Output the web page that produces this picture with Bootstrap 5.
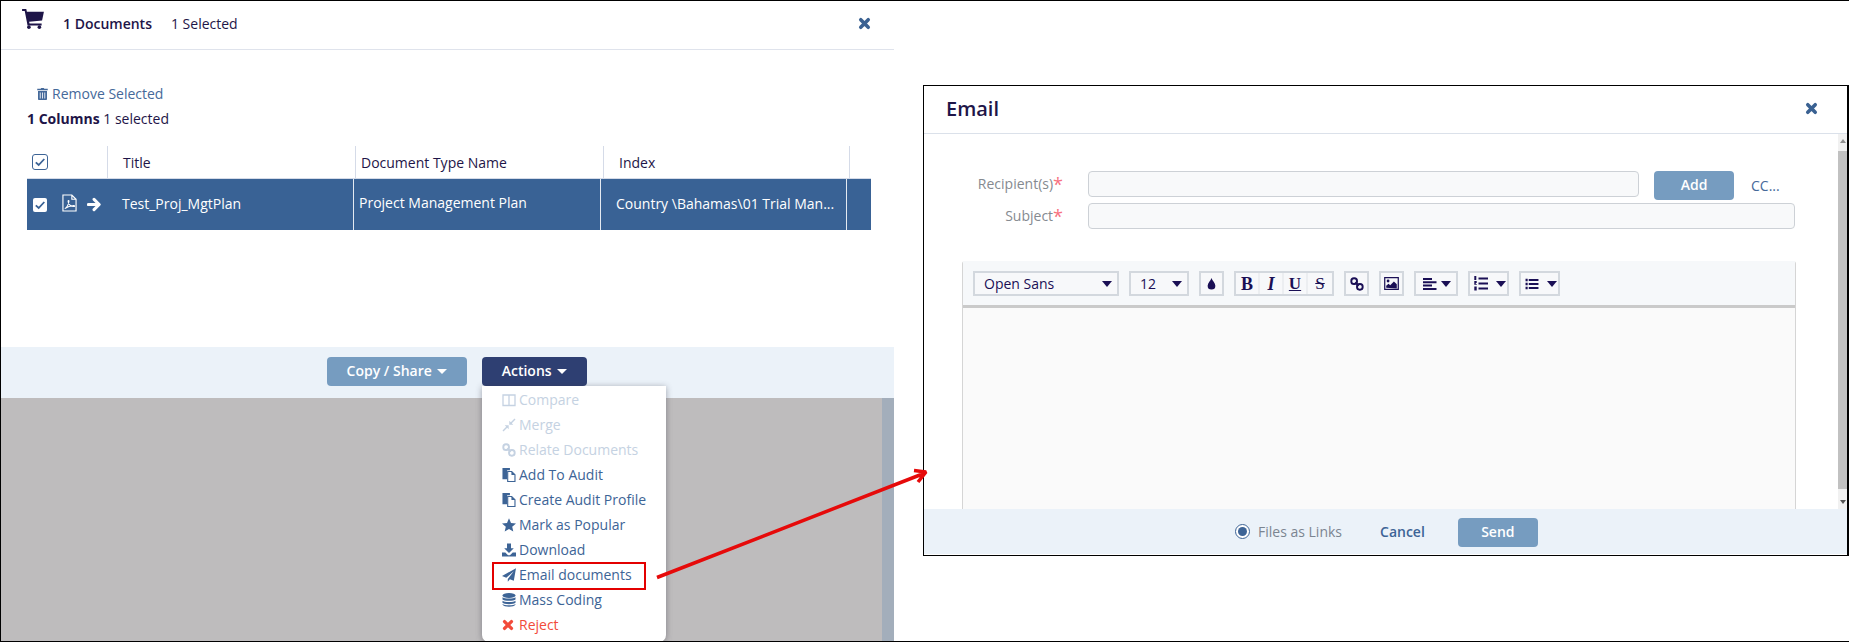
<!DOCTYPE html>
<html lang="en">
<head>
    <meta charset="UTF-8">
    <meta name="viewport" content="width=device-width, initial-scale=1.0">
    <title>Email documents</title>
    <link href="https://cdn.jsdelivr.net/npm/bootstrap@5.3.0/dist/css/bootstrap.min.css" rel="stylesheet">
    <style>
        html, body { margin: 0; background: #fff; overflow: hidden; }
        body { font-family: "Open Sans", "Liberation Sans", sans-serif; font-size: 14px; color: #1e1548; }
        svg { display: block; flex: none; }
        .shot { position: relative; width: 1849px; height: 642px; border-top: 1px solid #000; border-bottom: 1px solid #000; border-left: 1px solid #000; overflow: hidden; }

        /* left pane */
        .cart-pane { width: 893px; height: 640px; flex: none; }
        .cart-head { height: 49px; border-bottom: 1.5px solid #dfe3ec; padding: 0 23px 4px 21px; }
        .cart-title { font-weight: 600; margin-left: 19px; margin-right: 19px; }
        .cart-x, .mail-x { color: #3a6192; }
        .cart-tools { height: 96px; padding: 16px 0 0 26px; }
        .remove-link { color: #45699a; padding: 12px 0 0 10px; height: 43px; line-height: 19px; }
        .col-count { line-height: 19px; }
        .grid-wrap { width: 844px; margin-left: 26px; height: 201px; }
        .grid-head { height: 33px; border-bottom: 1.5px solid #d5dbe8; }
        .grid-head > div { border-right: 1.5px solid #d5dbe8; padding-left: 15px; line-height: 33px; }
        .grid-row { height: 51px; background: #396295; color: #fff; }
        .grid-row > div { border-right: 1.5px solid #e4eaf2; padding-left: 14px; line-height: 50px; white-space: nowrap; }
        .check-box { width: 16px; height: 16px; border: 1.5px solid #3d6496; border-radius: 3px; color: #3d6496; }
        .check-solid { width: 14px; height: 14px; background: #fff; border-radius: 2px; color: #396295; }
        .bar-foot { height: 51px; background: #ebf2f9; padding-top: 10px; padding-left: 326px; gap: 15px; }
        .shot-btn { height: 29px; border: 0; border-radius: 4px; color: #fff; font-weight: 600; font-size: 14px; padding: 0 0 2px; line-height: 26px; }
        .btn-soft { background: #769cc0; }
        .btn-deep { background: #2e3f72; }
        .btn-copy { width: 140px; }
        .btn-actions { width: 105px; }
        .caret-w { display: inline-block; border-left: 5px solid transparent; border-right: 5px solid transparent; border-top: 5px solid #fff; vertical-align: 2px; margin-left: 2px; }
        .dim-zone { height: 243px; background: #bebcbd; }
        .dim-strip { width: 12px; margin-left: auto; height: 100%; background: #a3aebb; }

        .act-menu { position: absolute; left: 481px; top: 385px; width: 184px; height: 256px; background: #fff; border-radius: 0 0 7px 7px; box-shadow: 0 1px 6px rgba(60, 60, 70, .45); padding: 1px 0 0 20px; margin: 0; list-style: none; color: #3d6496; }
        .act-menu li { height: 25px; line-height: 25px; white-space: nowrap; gap: 3px; }
        .act-menu li.is-off { color: #c5d2e2; }
        .act-menu li.is-bad { color: #f24b3a; }
        .act-menu svg { width: 14px; height: 14px; }
        .red-box { position: absolute; left: 491px; top: 561px; width: 154px; height: 28px; border: 2px solid #e30000; }
        .red-arrow { position: absolute; left: 650px; top: 460px; }

        /* email window */
        .mail-win { width: 926px; height: 471px; margin: 84px 0 0 29px; border: 1.5px solid #000; border-right-width: 2px; flex: none; background: #fff; }
        .mail-head { height: 48px; border-bottom: 1.5px solid #dbe1ea; padding: 0 29px 2px 22px; }
        .mail-head h5 { font-size: 20px; font-weight: 600; color: #1e1548; margin: 0; }
        .mail-body { height: 375px; overflow: hidden; }
        .mail-form { width: 914px; padding: 37px 0 0 38px; }
        .field-row { gap: 0; }
        .field-label { width: 125px; padding-right: 24px; text-align: right; color: #858a90; line-height: 26px; margin-right: 1px; }
        .field-label b { color: #f7727f; font-weight: 400; font-size: 18px; line-height: 10px; vertical-align: -2px; }
        .field-box { height: 26px; background: #f8f9fa; border: 1px solid #cdd1d6; border-radius: 4px; }
        .field-to { width: 551px; }
        .field-subj { width: 707px; margin-top: 6px; }
        .add-btn { width: 80px; margin-left: 15px; }
        .cc-link { color: #45699a; margin-left: 17px; line-height: 29px; }
        .subject-row { margin-top: -3px; }
        .subject-row .field-label { margin-top: 6px; }
        .editor-box { width: 834px; height: 249px; margin: 32px 0 0 0; border-left: 1.5px solid #d5d5d5; border-right: 1.5px solid #d5d5d5; background: #fafafa; border-radius: 3px 3px 0 0; }
        .edit-bar { height: 47px; background: #f6f8fa; border-bottom: 3px solid #cacaca; padding: 10px 0 0 10px; gap: 10px; }
        .ed-btn { height: 25px; border: 2px solid #d3d8de; background: #f7f8fa; color: #1a0f55; }
        .ed-drop { padding-left: 9px; justify-content: space-between; padding-right: 5px; }
        .caret-d { display: block; border-left: 5.5px solid transparent; border-right: 5.5px solid transparent; border-top: 6px solid #1a0f55; flex: none; }
        .ed-one { width: 25px; justify-content: center; }
        .ed-font { width: 146px; }
        .ed-size { width: 60px; }
        .ed-style { width: 24px; justify-content: center; font-family: "Liberation Serif", serif; font-size: 17px; font-weight: 700; line-height: 1; color: #1a0f55; }
        .ed-group { display: flex; border: 2px solid #d3d8de; height: 25px; background: #f7f8fa; }
        .ed-group .ed-style { height: 21px; border: 0; border-right: 2px solid #eceef1; }
        .ed-group .ed-style:last-child { border-right: 0; }
        .ed-list { width: 41px; padding: 0 1px 0 4px; justify-content: space-between; }
        .ed-align { width: 44px; padding: 0 5px 0 7px; justify-content: space-between; }
        .scroll-rail { width: 9px; height: 375px; background: #f1f1f1; margin-left: auto; }
        .scroll-top { height: 12px; }
        .scroll-thumb { height: 338px; background: #c1c1c1; }
        .tri-up, .tri-down { display: block; width: 0; margin: 5px auto 0; border-left: 3px solid transparent; border-right: 3px solid transparent; }
        .tri-up { border-bottom: 4px solid #8f8f8f; }
        .tri-down { border-top: 4px solid #555; margin-top: 11px; }
        .mail-foot { height: 45px; background: #ebf2f9; padding-top: 9px; padding-left: 311px; }
        .radio-dot { width: 15px; height: 15px; border: 1.5px solid #3d6496; border-radius: 50%; background: #fff; padding: 2px; margin-right: 8px; margin-top: 6px; }
        .radio-dot i { display: block; width: 100%; height: 100%; border-radius: 50%; background: #3d6496; }
        .radio-text { color: #7b8591; line-height: 27px; margin-right: 38px; }
        .cancel-link { color: #3d6496; font-weight: 600; line-height: 27px; margin-right: 33px; }
        .send-btn { width: 80px; }
    </style>
</head>
<body>
<svg width="0" height="0" style="position:absolute">
    <symbol id="i-x" viewBox="0 0 16 16"><path d="M3.4 3.4 12.6 12.6M12.6 3.4 3.4 12.6" fill="none" stroke="currentColor" stroke-width="4.4" stroke-linecap="round"/></symbol>
    <symbol id="i-cart" viewBox="0 0 24 22"><path fill="currentColor" d="M0 0h4.6l.7 3H24l-2 9.6-14.300 1.300.5 2.100H21.500v2.200H6L2.900 2.200H0z"/><circle cx="7.500" cy="20" r="2" fill="currentColor"/><circle cx="19" cy="20" r="2" fill="currentColor"/></symbol>
    <symbol id="i-trash" viewBox="0 0 14 16"><path fill="currentColor" d="M4.500 1 5.300 0h3.400l.8 1H14v2H0V1zM1 4h12v10.500c0 .9-.6 1.500-1.400 1.500H2.400C1.600 16 1 15.400 1 14.500z"/><path d="M4 6v8M7 6v8M10 6v8" stroke="#fff" stroke-width="1.100"/></symbol>
    <symbol id="i-tick" viewBox="0 0 14 14"><path d="M2.800 7.300 5.700 10l5.600-6" fill="none" stroke="currentColor" stroke-width="1.800"/></symbol>
    <symbol id="i-pdf" viewBox="0 0 16 19"><path fill="none" stroke="currentColor" stroke-width="1.200" d="M1 1h9.500L15 5.500V18H1zM10.500 1v4.500H15"/><path fill="none" stroke="currentColor" stroke-width="1.100" d="M3 15.500c1.800-1 3.800-4.600 4.400-7.800.2-1.200-.9-1.300-.9-.2 0 2.700 2.400 5.800 6.200 5.800 1.300 0 1-1.200-.3-1.100-2.400.2-6 1-9.400 3.300z"/></symbol>
    <symbol id="i-right" viewBox="0 0 16 16"><path d="M1.500 8h11M7.500 2.500 13 8l-5.500 5.500" fill="none" stroke="currentColor" stroke-width="3.200" stroke-linecap="round" stroke-linejoin="round"/></symbol>
    <symbol id="i-cols" viewBox="0 0 14 14"><path fill="none" stroke="currentColor" stroke-width="1.300" d="M1 2h12v10.500H1zM7 2v10.500"/></symbol>
    <symbol id="i-merge" viewBox="0 0 14 14"><path fill="currentColor" d="M13.500 1.500 9.800 5.200l1.500 1.500H7.300V2.700l1.500 1.500L12.500.500zM.500 12.500l3.700-3.700-1.500-1.500h4v4L5.200 9.800l-3.700 3.700z"/></symbol>
    <symbol id="i-link" viewBox="0 0 16 16"><g fill="none" stroke="currentColor" stroke-width="2.200"><rect x="1.500" y="1.500" width="6.500" height="6.500" rx="3"/><rect x="8" y="8" width="6.500" height="6.500" rx="3"/><path d="M6 6l4 4"/></g></symbol>
    <symbol id="i-copy" viewBox="0 0 14 15"><path fill="currentColor" d="M0 0h8v2.500H5V12H0z"/><path fill="#fff" stroke="currentColor" stroke-width="1.200" d="M5.600 3.800h4.300L13.400 7.300v7.100H5.600z"/><path fill="currentColor" d="M9.600 3.800v3.800h3.800z"/></symbol>
    <symbol id="i-star" viewBox="0 0 14 14"><path fill="currentColor" d="M7 .3 9 4.900l5 .5-3.800 3.300 1.100 4.900L7 11l-4.300 2.600 1.100-4.900L0 5.400l5-.5z"/></symbol>
    <symbol id="i-down" viewBox="0 0 14 14"><path fill="currentColor" d="M5 .5h4v4.700h2.800L7 10 2.200 5.200H5zM0 9.500h3.300L5.500 11.700c.8.800 2.200.8 3 0l2.200-2.200H14v4H0z"/></symbol>
    <symbol id="i-plane" viewBox="0 0 14 14"><path fill="currentColor" d="M14 .2 11.800 12.800 7.900 11.200 5.800 13.800V11L11.800 3.200 4.300 9.800 0 8z"/></symbol>
    <symbol id="i-db" viewBox="0 0 14 14"><g fill="currentColor"><ellipse cx="7" cy="2.500" rx="6.500" ry="2.500"/><path d="M.5 4.300C1.800 6 12.200 6 13.500 4.300v2.200C12.200 8.300 1.800 8.300.5 6.500zM.5 7.700C1.800 9.500 12.200 9.500 13.500 7.700v2.100C12.200 11.600 1.800 11.600.5 9.800zM.5 11C1.800 12.800 12.200 12.800 13.500 11v.6C12.200 14.500 1.800 14.500.5 11.600z"/></g></symbol>
    <symbol id="i-drop" viewBox="0 0 10 14"><path fill="currentColor" d="M5 0c.8 3 4.500 5.700 4.500 9a4.500 4.500 0 0 1-9 0C.5 5.700 4.200 3 5 0z"/></symbol>
    <symbol id="i-pic" viewBox="0 0 16 14"><path fill="none" stroke="currentColor" stroke-width="1.300" d="M.7.700h14.600v12.600H.7z"/><circle cx="4.300" cy="4.300" r="1.500" fill="currentColor"/><path fill="currentColor" d="M2.300 11.500V9.400l2.500-2 1.800 1.500 4-4 3.100 3v4.600z"/></symbol>
    <symbol id="i-left" viewBox="0 0 14 12"><path fill="currentColor" d="M0 0h9v2H0zM0 3.300h13.500v2H0zM0 6.600h9v2H0zM0 9.900h13.500v2H0z"/></symbol>
    <symbol id="i-ol" viewBox="0 0 14 15"><path fill="currentColor" d="M4.500 1.500H14v2H4.500zM4.500 6.500H14v2H4.500zM4.500 11.500H14v2H4.500zM.3 0h2v4H.3zM.3 5h2.400v2H1.800v1h1v.8H.3zM.3 10.500h2.400v4H.3z"/></symbol>
    <symbol id="i-ul" viewBox="0 0 14 13"><path fill="currentColor" d="M3.500 1H14v2.200H3.500zM3.500 5.400H14v2.200H3.500zM3.500 9.800H14V12H3.500zM0 .8h2.300v2.600H0zM0 5.200h2.300v2.600H0zM0 9.600h2.300v2.600H0z"/></symbol>
</svg>

<div class="shot d-flex">
    <div class="cart-pane d-flex flex-column">
        <div class="cart-head d-flex align-items-center">
            <svg width="22" height="20" style="margin-top:-8px"><use href="#i-cart"/></svg>
            <span class="cart-title">1 Documents</span>
            <span>1 Selected</span>
            <svg class="cart-x ms-auto" width="13" height="13"><use href="#i-x"/></svg>
        </div>
        <div class="cart-tools">
            <div class="remove-link d-flex align-items-center gap-1">
                <svg width="11" height="12"><use href="#i-trash"/></svg>
                <span>Remove Selected</span>
            </div>
            <div class="col-count"><b class="fw-bold">1 Columns</b> 1 selected</div>
        </div>
        <div class="grid-wrap">
            <div class="grid-head d-flex">
                <div style="width:81px;padding-left:5px" class="d-flex align-items-center"><span class="check-box d-flex align-items-center justify-content-center"><svg width="14" height="14"><use href="#i-tick"/></svg></span></div>
                <div style="width:248px">Title</div>
                <div style="width:248px;padding-left:5px">Document Type Name</div>
                <div style="width:246px">Index</div>
            </div>
            <div class="grid-row d-flex">
                <div style="width:80px;padding-left:6px;border-right:0" class="d-flex align-items-center">
                    <span class="check-solid d-flex align-items-center justify-content-center"><svg width="14" height="14"><use href="#i-tick"/></svg></span>
                    <svg width="15" height="18" style="margin:-4px 0 0 15px"><use href="#i-pdf"/></svg>
                    <svg width="15" height="15" style="margin-left:10px"><use href="#i-right"/></svg>
                </div>
                <div style="width:247px;padding-left:15px">Test_Proj_MgtPlan</div>
                <div style="width:247px;padding-left:5px;line-height:47px">Project Management Plan</div>
                <div style="width:246px;padding-left:15px">Country \Bahamas\01 Trial Man...</div>
            </div>
        </div>
        <div class="bar-foot d-flex">
            <button class="shot-btn btn-soft btn-copy">Copy / Share <span class="caret-w"></span></button>
            <button class="shot-btn btn-deep btn-actions">Actions <span class="caret-w"></span></button>
        </div>
        <div class="dim-zone"><div class="dim-strip"></div></div>
    </div>

    <div class="mail-win">
        <div class="mail-head d-flex align-items-center justify-content-between">
            <h5>Email</h5>
            <svg class="mail-x" width="13" height="13"><use href="#i-x"/></svg>
        </div>
        <div class="mail-body d-flex">
            <div class="mail-form">
                <div class="field-row d-flex align-items-start">
                    <div class="field-label">Recipient(s)<b>*</b></div>
                    <div class="field-box field-to"></div>
                    <button class="shot-btn btn-soft add-btn">Add</button>
                    <span class="cc-link">CC...</span>
                </div>
                <div class="field-row subject-row d-flex align-items-start">
                    <div class="field-label">Subject<b>*</b></div>
                    <div class="field-box field-subj"></div>
                </div>
                <div class="editor-box">
                    <div class="edit-bar d-flex">
                        <div class="ed-btn ed-drop ed-font d-flex align-items-center"><span>Open Sans</span><i class="caret-d"></i></div>
                        <div class="ed-btn ed-drop ed-size d-flex align-items-center"><span>12</span><i class="caret-d"></i></div>
                        <div class="ed-btn ed-one d-flex align-items-center"><svg width="9" height="12"><use href="#i-drop"/></svg></div>
                        <div class="ed-group">
                            <div class="ed-style d-flex align-items-center" style="font-size:18px">B</div>
                            <div class="ed-style d-flex align-items-center fst-italic" style="font-size:18px">I</div>
                            <div class="ed-style d-flex align-items-center text-decoration-underline">U</div>
                            <div class="ed-style d-flex align-items-center text-decoration-line-through fw-normal">S</div>
                        </div>
                        <div class="ed-btn ed-one d-flex align-items-center"><svg width="14" height="14"><use href="#i-link"/></svg></div>
                        <div class="ed-btn ed-one d-flex align-items-center"><svg width="15" height="13"><use href="#i-pic"/></svg></div>
                        <div class="ed-btn ed-align d-flex align-items-center"><svg width="14" height="12"><use href="#i-left"/></svg><i class="caret-d"></i></div>
                        <div class="ed-btn ed-list d-flex align-items-center"><svg width="14" height="15"><use href="#i-ol"/></svg><i class="caret-d"></i></div>
                        <div class="ed-btn ed-list d-flex align-items-center"><svg width="14" height="12"><use href="#i-ul"/></svg><i class="caret-d"></i></div>
                    </div>
                </div>
            </div>
            <div class="scroll-rail">
                <div class="scroll-top"><i class="tri-up"></i></div>
                <div class="scroll-thumb"></div>
                <i class="tri-down"></i>
            </div>
        </div>
        <div class="mail-foot d-flex">
            <span class="radio-dot"><i></i></span>
            <span class="radio-text">Files as Links</span>
            <span class="cancel-link">Cancel</span>
            <button class="shot-btn btn-soft send-btn">Send</button>
        </div>
    </div>

    <ul class="act-menu">
        <li class="d-flex align-items-center is-off"><svg><use href="#i-cols"/></svg>Compare</li>
        <li class="d-flex align-items-center is-off"><svg><use href="#i-merge"/></svg>Merge</li>
        <li class="d-flex align-items-center is-off"><svg><use href="#i-link"/></svg>Relate Documents</li>
        <li class="d-flex align-items-center"><svg><use href="#i-copy"/></svg>Add To Audit</li>
        <li class="d-flex align-items-center"><svg><use href="#i-copy"/></svg>Create Audit Profile</li>
        <li class="d-flex align-items-center"><svg><use href="#i-star"/></svg>Mark as Popular</li>
        <li class="d-flex align-items-center"><svg><use href="#i-down"/></svg>Download</li>
        <li class="d-flex align-items-center"><svg><use href="#i-plane"/></svg>Email documents</li>
        <li class="d-flex align-items-center"><svg><use href="#i-db"/></svg>Mass Coding</li>
        <li class="d-flex align-items-center is-bad"><svg style="width:12px;margin-right:2px"><use href="#i-x"/></svg>Reject</li>
    </ul>
    <div class="red-box"></div>
    <svg class="red-arrow" width="285" height="125" viewBox="0 0 285 125">
        <path d="M6 116.500 274 12M263 9.500 275 11 267 21" fill="none" stroke="#e60a0a" stroke-width="3.500" stroke-linejoin="bevel"/>
    </svg>
</div>
<script src="https://cdn.jsdelivr.net/npm/bootstrap@5.3.0/dist/js/bootstrap.bundle.min.js"></script>
</body>
</html>
